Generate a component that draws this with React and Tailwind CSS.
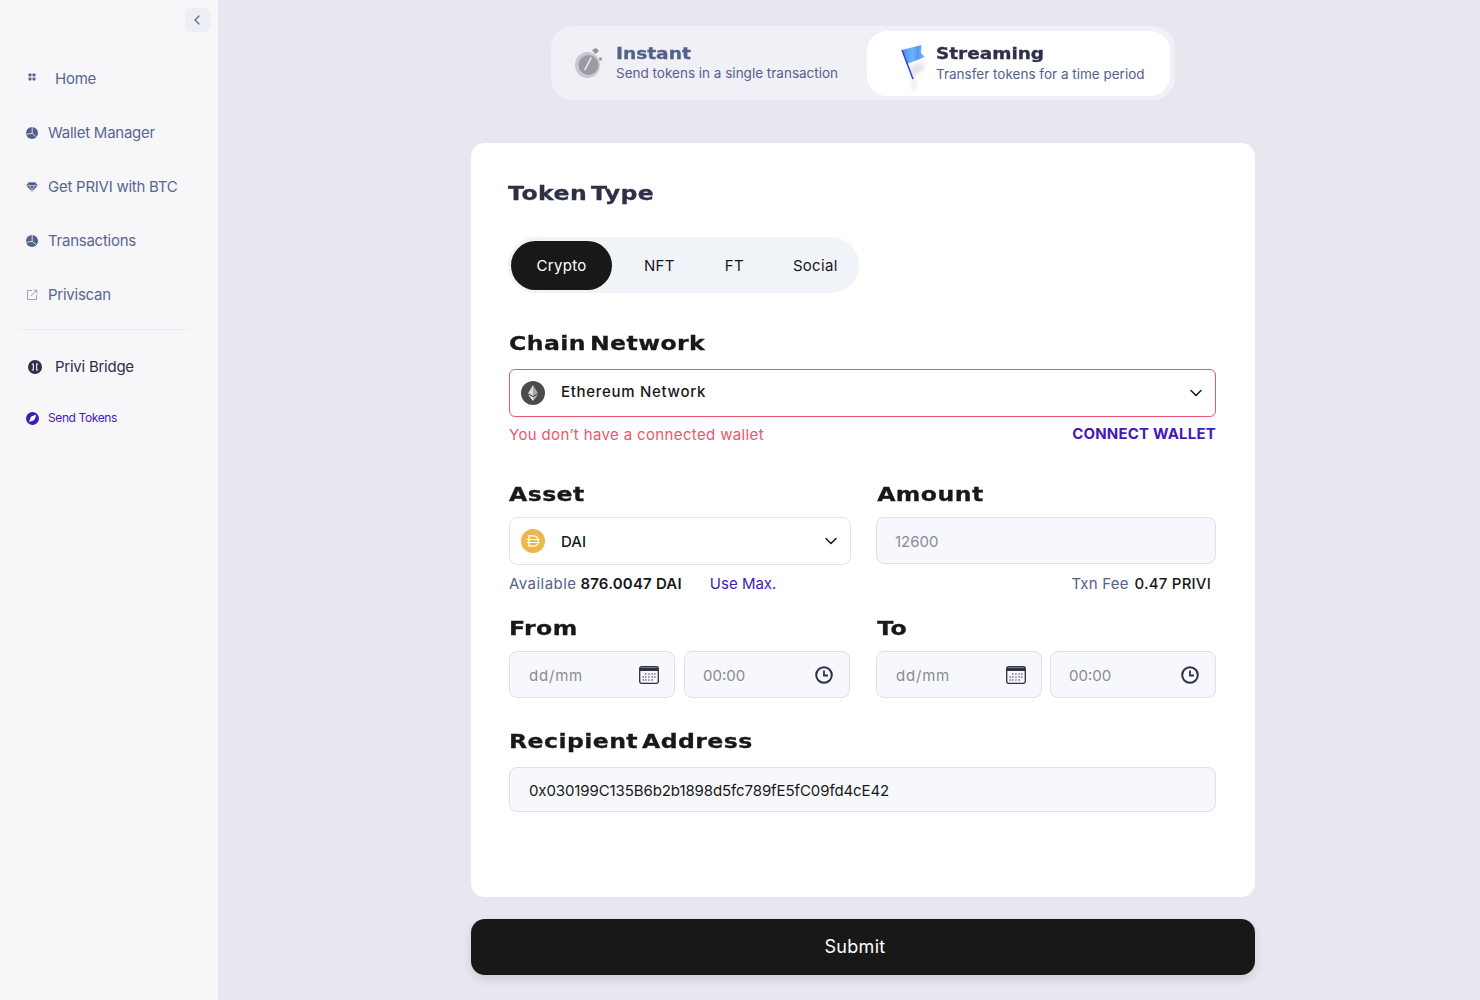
import { ChevronLeft, ChevronDown } from 'lucide-react'

const body = "[font-family:Inter,Liberation_Sans,sans-serif]"
const heading = "[font-family:DejaVu_Sans,Liberation_Sans,sans-serif] font-bold origin-left [-webkit-text-stroke:0.3px]"

function DotsIcon() {
  return (
    <svg width="8" height="8" viewBox="0 0 8 8" fill="#5a6690">
      <rect x="0.5" y="0.5" width="3" height="3" rx="0.8" />
      <rect x="4.5" y="0.5" width="3" height="3" rx="0.8" />
      <rect x="0.5" y="4.5" width="3" height="3" rx="0.8" />
      <rect x="4.5" y="4.5" width="3" height="3" rx="0.8" />
    </svg>
  )
}

function PieIcon() {
  return (
    <svg width="12" height="12" viewBox="0 0 12 12">
      <circle cx="6" cy="6" r="6" fill="#54618c" />
      <path d="M6.2 0V6.4L0.6 7.2M6.2 6.4L10.4 10" stroke="#f7f7fa" strokeWidth="0.8" fill="none" />
    </svg>
  )
}

function GemIcon() {
  return (
    <svg width="12" height="10" viewBox="0 0 12 10" fill="#54618c">
      <path d="M2.8 0.3H9.2L11.8 3.4 6 9.8 0.2 3.4Z" />
      <path d="M0.5 3.6H11.5M3.6 3.6L6 9M8.4 3.6L6 9" stroke="#f7f7fa" strokeWidth="0.6" fill="none" />
    </svg>
  )
}

function ExternalIcon() {
  return (
    <svg width="12" height="12" viewBox="0 0 12 12" fill="none" stroke="#9aa3bf" strokeWidth="1">
      <path d="M6 1.5H1.5V10.5H10.5V6" />
      <path d="M5 7L10.5 1.5M7.5 1.2H10.8V4.5" />
    </svg>
  )
}

function BridgeIcon() {
  return (
    <svg width="14" height="14" viewBox="0 0 14 14">
      <circle cx="7" cy="7" r="7" fill="#2d3047" />
      <path d="M3.8 3.6H5.9V10.4H3.8V9.6H4.8V4.4H3.8ZM10.2 3.6H8.1V10.4H10.2V9.6H9.2V4.4H10.2Z" fill="#f7f7fa" />
    </svg>
  )
}

function SendIcon() {
  return (
    <svg width="13" height="13" viewBox="0 0 13 13">
      <circle cx="6.5" cy="6.5" r="6.5" fill="#431ab7" />
      <path d="M3 10L4.6 5.4C5.4 4.2 7.6 3.4 10 3 9.6 5.4 8.8 7.6 7.6 8.4Z" fill="#f7f7fa" />
    </svg>
  )
}

function StopwatchIcon() {
  return (
    <svg width="40" height="45" viewBox="0 0 40 45" className="shrink-0">
      <ellipse cx="17.5" cy="24" rx="12.5" ry="13" fill="#c8c8ce" />
      <circle cx="18.5" cy="24" r="10" fill="#9b9ba3" />
      <path d="M15 28.5L21 17" stroke="#ecebf1" strokeWidth="1.6" strokeLinecap="round" />
      <path d="M22 9L26 7 29 10 25.5 13Z" fill="#8f8f97" />
      <circle cx="30.5" cy="18" r="1.7" fill="#9b9ba3" />
    </svg>
  )
}

function FlagIcon() {
  return (
    <svg width="40" height="55" viewBox="0 0 40 55" className="shrink-0 mt-[8px]">
      <defs>
        <linearGradient id="flagFill" x1="0" y1="0" x2="1" y2="0">
          <stop offset="0" stopColor="#4b90f5" />
          <stop offset="0.45" stopColor="#6fb2fa" />
          <stop offset="0.7" stopColor="#4f97f5" />
          <stop offset="1" stopColor="#8ccafc" />
        </linearGradient>
        <filter id="flagShadow" x="-50%" y="-50%" width="200%" height="200%">
          <feGaussianBlur stdDeviation="2.2" />
        </filter>
      </defs>
      <path d="M15 26L30 22 28 30 19 36 21 50 18 50Z" fill="#c9c9ce" opacity="0.55" filter="url(#flagShadow)" />
      <path d="M7 10L26.5 5 26 13 30 17 12 24Z" fill="url(#flagFill)" />
      <path d="M7 10L18 39" stroke="#2f3fe0" strokeWidth="1.5" />
    </svg>
  )
}

function EthIcon() {
  return (
    <svg width="24" height="24" viewBox="0 0 24 24" className="shrink-0">
      <circle cx="12" cy="12" r="12" fill="#4b4b4e" />
      <path d="M12 4L7 12.2 12 15Z" fill="#d9d9d9" />
      <path d="M12 4L17 12.2 12 15Z" fill="#a8a8a8" />
      <path d="M7 13.4L12 20 12 16.3Z" fill="#eeeeee" />
      <path d="M17 13.4L12 20 12 16.3Z" fill="#bdbdbd" />
    </svg>
  )
}

function DaiIcon() {
  return (
    <svg width="24" height="24" viewBox="0 0 24 24" fill="none" className="shrink-0">
      <circle cx="12" cy="12" r="12" fill="#edb74f" />
      <path d="M8 6.8H12.4C15.4 6.8 17.4 9 17.4 12S15.4 17.2 12.4 17.2H8Z" stroke="#fff" strokeWidth="1.3" />
      <path d="M5.8 10.5H18.4M5.8 13.5H18.4" stroke="#fff" strokeWidth="1.2" />
    </svg>
  )
}

function CalendarIcon() {
  return (
    <svg width="20" height="18" viewBox="0 0 20 18" fill="none">
      <rect x="0.7" y="0.7" width="18.6" height="16.6" rx="1.8" stroke="#2d3047" strokeWidth="1.3" />
      <path d="M1 1.5H19V5H1Z" fill="#2d3047" />
      <path d="M6 8h1.5M9.2 8h1.5M12.4 8h1.5M15 8h1.5M3.5 11h1.5M6 11h1.5M9.2 11h1.5M12.4 11h1.5M15 11h1.5M3.5 14h1.5M6 14h1.5M9.2 14h1.5M12.4 14h1.5" stroke="#2d3047" strokeWidth="1" />
    </svg>
  )
}

function ClockIcon() {
  return (
    <svg width="18" height="18" viewBox="0 0 18 18" fill="none" stroke="#2d3047" strokeWidth="2">
      <circle cx="9" cy="9" r="7.8" />
      <path d="M9 4.5V9.5H13" strokeWidth="1.8" />
    </svg>
  )
}

function NavRow({ icon, label, className }) {
  return (
    <div className={`flex items-center ${className}`}>
      <span className="w-[30px] flex justify-center shrink-0 -ml-[7px] mr-[1px]">{icon}</span>
      <span className="text-[15px] text-[#5a6690] tracking-[-0.25px]">{label}</span>
    </div>
  )
}

function Sidebar() {
  return (
    <aside className={`w-[218px] shrink-0 bg-[#f7f7fa] ${body}`}>
      <div className="flex justify-end pt-[8px] pr-[8px]">
        <div className="w-[25px] h-[24px] rounded-[6px] bg-[#eeeff4] flex items-center justify-center">
          <ChevronLeft size={16} color="#5a6690" strokeWidth={1.8} className="-ml-[1px]" />
        </div>
      </div>
      <div className="pl-[24px]">
        <div className="flex items-center h-[20px] mt-[37px]">
          <span className="w-[31px] shrink-0 pl-[4px] -mt-[4px]"><DotsIcon /></span>
          <span className="text-[15px] text-[#5a6690] tracking-[-0.25px]">Home</span>
        </div>
        <NavRow icon={<PieIcon />} label="Wallet Manager" className="h-[20px] mt-[34px]" />
        <NavRow icon={<GemIcon />} label="Get PRIVI with BTC" className="h-[20px] mt-[34px]" />
        <NavRow icon={<PieIcon />} label="Transactions" className="h-[20px] mt-[34px]" />
        <NavRow icon={<ExternalIcon />} label="Priviscan" className="h-[20px] mt-[34px]" />
      </div>
      <div className="h-px bg-[#ebebf0] ml-[18px] w-[170px] mt-[24px]" />
      <div className="pl-[28px] flex items-center h-[20px] mt-[27px]">
        <span className="w-[27px] shrink-0"><BridgeIcon /></span>
        <span className="text-[15px] text-[#2d3047] tracking-[-0.25px]">Privi Bridge</span>
      </div>
      <div className="pl-[26px] flex items-center h-[16px] mt-[33px]">
        <span className="w-[22px] shrink-0"><SendIcon /></span>
        <span className="text-[12px] text-[#431ab7] tracking-[-0.4px]">Send Tokens</span>
      </div>
    </aside>
  )
}

function Heading({ children, className = '' }) {
  return (
    <h2 className={`${heading} text-[20px] leading-[24px] text-[#181818] scale-x-[1.18] tracking-[0.35px] [word-spacing:-4px] ${className}`}>
      {children}
    </h2>
  )
}

function Field({ children, className = '' }) {
  return (
    <div className={`flex items-center rounded-[8px] border border-[#dfe0e8] bg-[#f7f8fd] text-[15px] ${className}`}>
      {children}
    </div>
  )
}

function DateTime({ date, time, className = '' }) {
  return (
    <div className={`flex justify-between mt-[11px] ${className}`}>
      <Field className="w-[166px] h-[47px] pl-[19px] pr-[15px] justify-between text-[#8a8a94]">
        <span className="tracking-[0.8px] pt-[3px]">{date}</span>
        <CalendarIcon />
      </Field>
      <Field className="w-[166px] h-[47px] pl-[18px] pr-[16px] justify-between text-[#8a8a94]">
        <span className="pt-[3px]">{time}</span>
        <ClockIcon />
      </Field>
    </div>
  )
}

export default function App() {
  return (
    <div className={`flex min-h-[1000px] bg-[#e9e6f0] ${body}`}>
      <Sidebar />
      <main className="flex-1 flex flex-col pl-[253px] pt-[26px]">
        <div className="w-[624px] h-[74px] ml-[80px] rounded-[22px] bg-[#f1f0f7] flex items-center justify-between pl-[19px] pr-[5px]">
          <div className="flex items-center gap-[6px]">
            <StopwatchIcon />
            <div>
              <div className={`${heading} text-[15px] leading-[20px] text-[#54618c] scale-x-[1.24]`}>Instant</div>
              <div className="text-[13.5px] leading-[18px] text-[#54618c]">Send tokens in a single transaction</div>
            </div>
          </div>
          <div className="w-[303px] h-[65px] rounded-[20px] bg-white flex items-center pl-[28px] gap-[1px]">
            <FlagIcon />
            <div>
              <div className={`${heading} text-[15px] leading-[20px] text-[#2d3047] scale-x-[1.23]`}>Streaming</div>
              <div className="text-[13.5px] leading-[18px] text-[#54618c] pt-[1px]">Transfer tokens for a time period</div>
            </div>
          </div>
        </div>

        <div className="w-[784px] h-[754px] mt-[43px] rounded-[14px] bg-white pt-[38px] pl-[38px] pr-[39px]">
          <Heading className="!text-[#2d3047] -ml-[1px]">Token Type</Heading>
          <div className="flex items-center w-[351px] h-[56px] mt-[32px] -ml-[1px] rounded-full bg-[#f0f3f7] pl-[3px] text-[15px] text-[#181818] tracking-[0.3px]">
            <div className="w-[101px] h-[49px] mt-[1px] pt-[2px] rounded-full bg-[#181818] text-white flex items-center justify-center">Crypto</div>
            <span className="ml-[32px] mt-[2px]">NFT</span>
            <span className="ml-[50px] mt-[2px]">FT</span>
            <span className="ml-[49px] mt-[2px]">Social</span>
          </div>

          <Heading className="mt-[38px]">Chain Network</Heading>
          <div className="flex items-center h-[48px] mt-[14px] rounded-[6px] border border-[#e9566f] bg-white pl-[11px] pr-[9px]">
            <EthIcon />
            <span className="ml-[16px] text-[15px] font-medium text-[#181818] tracking-[0.7px] -mt-[1px]">Ethereum Network</span>
            <ChevronDown size={20} className="ml-auto" color="#181818" strokeWidth={1.8} />
          </div>
          <div className="flex justify-between h-[20px] mt-[7px] text-[15px]">
            <span className="text-[#e9566f] tracking-[0.36px]">You don’t have a connected wallet</span>
            <span className="font-bold text-[#431ab7] -mt-[1px] tracking-[0.2px]">CONNECT WALLET</span>
          </div>

          <div className="grid grid-cols-[342px_340px] gap-x-[25px] mt-[38px]">
            <div>
              <Heading>Asset</Heading>
              <div className="flex items-center h-[48px] mt-[11px] rounded-[8px] border border-[#e2e3ec] bg-white pl-[11px] pr-[9px]">
                <DaiIcon />
                <span className="ml-[16px] text-[15px] font-medium text-[#181818] pt-[2px]">DAI</span>
                <ChevronDown size={20} className="ml-auto" color="#181818" strokeWidth={1.8} />
              </div>
              <div className="flex h-[20px] mt-[8px] text-[15px]">
                <span className="text-[#54618c] tracking-[0.45px]">Available</span>
                <span className="ml-[4px] font-semibold text-[#181818] tracking-[0.2px]">876.0047 DAI</span>
                <span className="ml-[28px] text-[#431ab7]">Use Max.</span>
              </div>
            </div>
            <div>
              <Heading className="pl-[1px]">Amount</Heading>
              <Field className="h-[47px] mt-[11px] pl-[18px] text-[#8a8a94]">
                <span className="pt-[3px]">12600</span>
              </Field>
              <div className="flex justify-end h-[20px] mt-[9px] pr-[5px] text-[15px] tracking-[0.2px]">
                <span className="text-[#54618c]">Txn Fee</span>
                <span className="ml-[6px] font-medium text-[#181818]">0.47 PRIVI</span>
              </div>
            </div>
            <div className="mt-[23px]">
              <Heading>From</Heading>
              <DateTime date="dd/mm" time="00:00" className="w-[341px]" />
            </div>
            <div className="mt-[23px]">
              <Heading className="pl-[1px]">To</Heading>
              <DateTime date="dd/mm" time="00:00" />
            </div>
          </div>

          <Heading className="mt-[31px]">Recipient Address</Heading>
          <Field className="h-[45px] mt-[14px] pl-[19px] text-[#181818]">
            <span className="tracking-[-0.1px] pt-[3px]">0x030199C135B6b2b1898d5fc789fE5fC09fd4cE42</span>
          </Field>
        </div>

        <button className="w-[784px] h-[56px] mt-[22px] pb-[2px] rounded-[14px] bg-[#181818] text-white text-[18px] tracking-[0.3px] pr-[16px] shadow-[0_4px_10px_rgba(0,0,0,0.12)]">
          Submit
        </button>
      </main>
    </div>
  )
}
